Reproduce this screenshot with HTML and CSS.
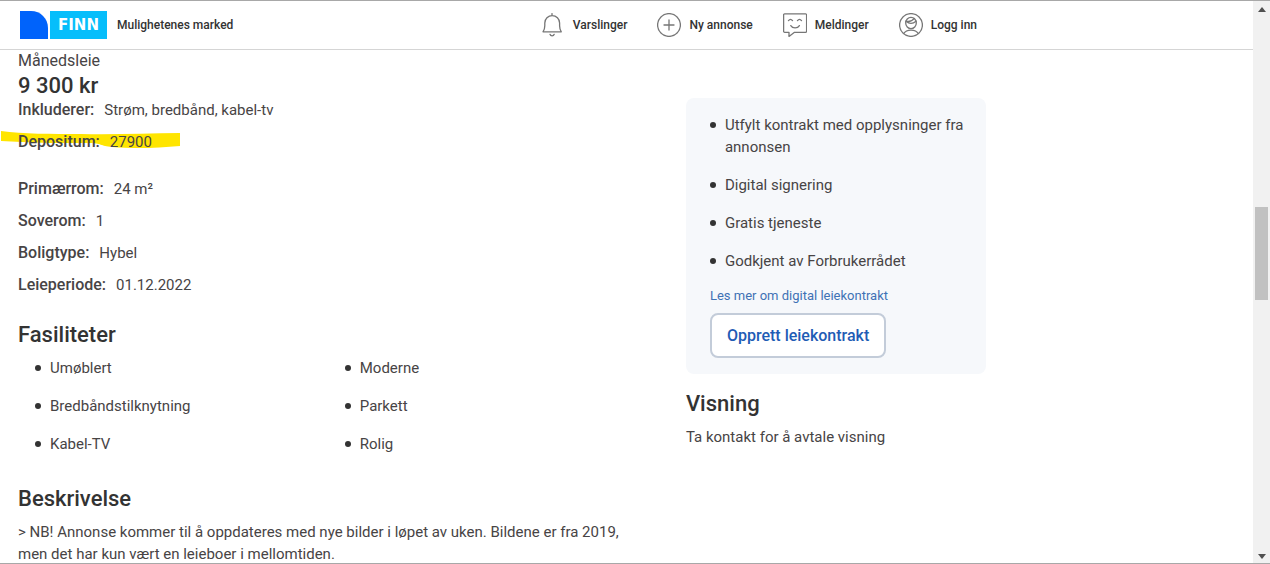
FILE: index.html
```
<!DOCTYPE html>
<html lang="no">
<head>
  <meta charset="UTF-8">
  <meta name="viewport" content="width=device-width, initial-scale=1.0">
  <title>FINN - Mulighetenes marked</title>
  <link rel="stylesheet" href="styles.css">
</head>
<body>
  <div class="page">
    <header class="header">
      <div class="header-inner">
        <a href="#" class="brand">
          <svg class="logo-mark" viewBox="0 0 28 28" aria-hidden="true"><path d="M0 0h11c9.500 0 17 7.500 17 17v11H0z" fill="#0063fb"/></svg>
          <span class="logo-name">FINN</span>
          <span class="slogan">Mulighetenes marked</span>
        </a>
        <nav class="nav">
          <a href="#">
            <svg class="icon" viewBox="0 0 24 24" aria-hidden="true"><path d="M11 .6v2M2 18.800h18.300c-1.200-1.700-1.700-3.500-1.700-6V10a7.400 7.400 0 0 0-14.800 0v2.800c0 2.500-.6 4.300-1.800 6zM9 21.300a2.200 2.200 0 0 0 4.200 0"/></svg>
            Varslinger
          </a>
          <a href="#">
            <svg class="icon" viewBox="0 0 24 24" aria-hidden="true"><circle cx="12" cy="12" r="11.400"/><path d="M12 7v10M7 12h10"/></svg>
            Ny annonse
          </a>
          <a href="#">
            <svg class="icon" viewBox="0 0 24 24" aria-hidden="true"><path d="M1.600.8h21a1 1 0 0 1 1 1v16.500a1 1 0 0 1-1 1H11.500L6 23.400v-4.100H1.600a1 1 0 0 1-1-1V1.800a1 1 0 0 1 1-1zM5.500 7.600q2-2.600 4 0M14.500 7.600q2-2.600 4 0M7.800 12.600c1.800 3 6.800 3 8.600 0"/></svg>
            Meldinger
          </a>
          <a href="#">
            <svg class="icon" viewBox="0 0 24 24" aria-hidden="true"><circle cx="12" cy="12" r="11.400"/><ellipse cx="12" cy="10" rx="5.300" ry="5.600"/><path d="M7 8.200c3.200 2.800 7 2.600 10 0M7 8.200c3 .8 6.500-.6 8.300-2.800M4.800 20.500c2.500-4.600 11.900-4.600 14.400 0"/></svg>
            Logg inn
          </a>
        </nav>
      </div>
    </header>

    <main class="content">
      <div class="ad">
        <section class="price">
          <div class="label">Månedsleie</div>
          <div class="amount">9 300 kr</div>
          <dl class="facts">
            <div><dt>Inkluderer:</dt><dd>Strøm, bredbånd, kabel-tv</dd></div>
            <div class="marked">
              <svg class="marker" viewBox="0 0 180 18" preserveAspectRatio="none" aria-hidden="true"><path d="M1 0c22 3 50 3 80 3 35 1 65-1 99-1v13c-22 2-46 3-68 1-12-1-10-4-24-4-28 0-48 0-66-1-8 0-14-1-21-1z" fill="#ffe500"/></svg>
              <dt>Depositum:</dt><dd>27900</dd>
            </div>
          </dl>
        </section>

        <dl class="facts details">
          <div><dt>Primærrom:</dt><dd>24 m²</dd></div>
          <div><dt>Soverom:</dt><dd>1</dd></div>
          <div><dt>Boligtype:</dt><dd>Hybel</dd></div>
          <div><dt>Leieperiode:</dt><dd>01.12.2022</dd></div>
        </dl>

        <section class="facilities">
          <h2>Fasiliteter</h2>
          <ul class="list two-columns">
            <li>Umøblert</li>
            <li>Moderne</li>
            <li>Bredbåndstilknytning</li>
            <li>Parkett</li>
            <li>Kabel-TV</li>
            <li>Rolig</li>
          </ul>
        </section>

        <section class="description">
          <h2>Beskrivelse</h2>
          <p>&gt; NB! Annonse kommer til å oppdateres med nye bilder i løpet av uken. Bildene er fra 2019, men det har kun vært en leieboer i mellomtiden.</p>
        </section>
      </div>

      <aside class="side">
        <section class="contract">
          <ul class="list">
            <li>Utfylt kontrakt med opplysninger fra annonsen</li>
            <li>Digital signering</li>
            <li>Gratis tjeneste</li>
            <li>Godkjent av Forbrukerrådet</li>
          </ul>
          <a href="#" class="more">Les mer om digital leiekontrakt</a>
          <button type="button" class="create">Opprett leiekontrakt</button>
        </section>
        <section class="viewing">
          <h2>Visning</h2>
          <p>Ta kontakt for å avtale visning</p>
        </section>
      </aside>
    </main>
  </div>

  <div class="scrollbar" aria-hidden="true">
    <svg class="arrow" viewBox="0 0 8 5"><path d="M0 5l4-5 4 5z"/></svg>
    <div class="track"><div class="thumb"></div></div>
    <svg class="arrow" viewBox="0 0 8 5"><path d="M0 0l4 5 4-5z"/></svg>
  </div>
</body>
</html>
```
FILE: styles.css
```
* { box-sizing: border-box; }
body {
  margin: 0; height: 100vh; display: flex; overflow: hidden;
  border-top: 1px solid #a8a8a8; border-bottom: 1px solid #a8a8a8;
  font-family: Roboto, "Liberation Sans", sans-serif; font-size: 15px; line-height: 22px;
  color: #474445; background: #fff;
}
h2, p, ul, dl, dd { margin: 0; padding: 0; }
h2 { font-size: 22px; line-height: 28px; font-weight: 500; color: #333; }
a { text-decoration: none; }
.page { flex: 1; min-width: 0; overflow: hidden; }

/* Header */
.header { border-bottom: 1px solid #d5d5d5; }
.header-inner {
  display: flex; justify-content: space-between; align-items: center;
  max-width: 977px; height: 48px; padding-left: 20px;
}
.brand, .nav, .nav a { display: flex; align-items: center; }
.brand, .nav a { font-size: 12px; font-weight: 500; color: #333; }
.logo-mark { width: 28px; height: 28px; margin-right: 2px; }
.logo-name {
  width: 57px; line-height: 28px; text-align: center; background: #06befb; color: #fff;
  font-family: "DejaVu Sans", sans-serif; font-size: 15px; font-weight: 700;
}
.slogan { margin-left: 10px; }
.nav { gap: 30px; }
.nav a { gap: 8px; }
.icon { width: 24px; height: 24px; fill: none; stroke: #767676; stroke-width: 1.3; stroke-linecap: round; stroke-linejoin: round; }

/* Content */
.content {
  display: grid; grid-template-columns: 64% 31%; justify-content: space-between;
  max-width: 986px; padding-left: 18px;
}
.label { font-size: 16px; }
.amount { font-size: 22px; line-height: 27px; font-weight: 500; color: #333; }
.facts { display: flex; flex-direction: column; gap: 10px; }
.facts > div { display: flex; gap: 10px; }
.facts dt { font-size: 16px; font-weight: 500; }
.marked { position: relative; }
.marker { position: absolute; z-index: -1; left: -18px; top: 0; width: 180px; height: 18px; }
.details { margin-top: 25px; }
.facilities { margin-top: 25px; }
.list { display: grid; row-gap: 16px; list-style: none; }
.list li { display: grid; grid-template-columns: 15px 1fr; }
.list li::before { content: ""; width: 6px; height: 6px; margin-top: 8px; border-radius: 50%; background: #333; }
.two-columns { grid-template-columns: 1fr 1fr; margin-top: 8px; }
.two-columns li { padding-left: 17px; }
.description { margin-top: 30px; }
.description h2 { margin-bottom: 8px; }

/* Right column */
.side { padding-top: 48px; }
.contract { padding: 16px 16px 16px 24px; border-radius: 8px; background: #f6f8fb; }
.more { display: block; margin: 13px 0 6px; font-size: 13px; color: #3f72b5; }
.create {
  padding: 10px 15px; border: 2px solid #c3ccd9; border-radius: 8px; background: #fff;
  font: 500 16px/21px Roboto, "Liberation Sans", sans-serif; color: #1f5cb5; cursor: pointer;
}
.viewing { margin-top: 16px; }
.viewing h2 { margin-bottom: 8px; }

/* Scrollbar */
.scrollbar {
  width: 17px; padding: 6px 1px 4px; background: #f1f1f1;
  display: flex; flex-direction: column; align-items: center;
}
.arrow { width: 8px; height: 5px; fill: #505050; }
.track { flex: 1; width: 100%; padding: 195px 1px 0; }
.thumb { height: 93px; background: #c1c1c1; }
```
